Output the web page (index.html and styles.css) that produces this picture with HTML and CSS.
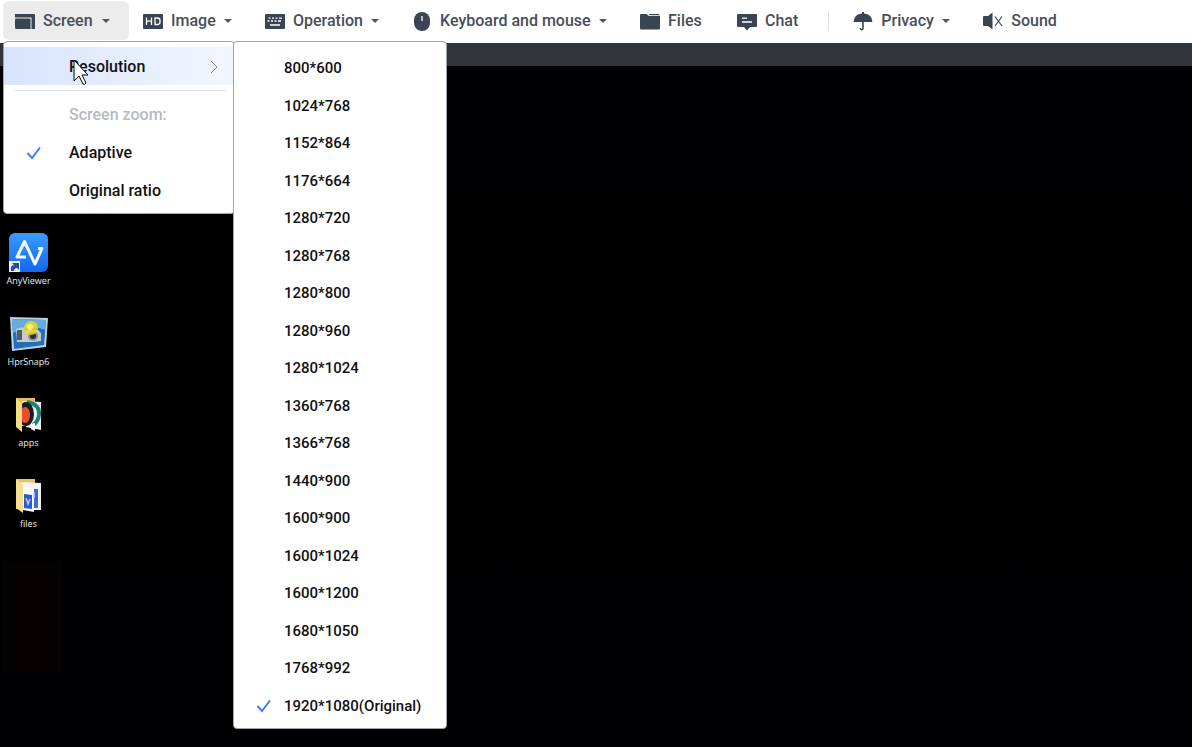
FILE: index.html
```
<!DOCTYPE html>
<html lang="en">
<head>
<meta charset="utf-8">
<meta name="viewport" content="width=device-width, initial-scale=1">
<title>Remote desktop</title>
<link rel="stylesheet" href="styles.css">
</head>
<body>
<header class="toolbar">
  <button class="tool tool-active" type="button" aria-expanded="true">
    <svg class="tool-icon" viewBox="0 0 20 20"><path d="M0 3h19q1 0 1 1v14h-3.500V6.500H0z"/><path d="M1 7.500h13.500q1 0 1 1V18H1.500Q0 18 0 16.500v-8q0-1 1-1z"/></svg>
    <span class="label label-screen">Screen</span><span class="caret"></span>
  </button>
  <button class="tool" type="button">
    <svg class="tool-icon" viewBox="0 0 20 20"><rect y="3" width="20" height="15" rx="1"/><path class="line" d="M3.500 6.500v7.500M8.500 6.500v7.500M3.500 10.200h5M12 7h2.500q2.500 0 2.500 2.500V11q0 2.500-2.500 2.500H12z"/></svg>
    <span class="label label-image">Image</span><span class="caret"></span>
  </button>
  <button class="tool" type="button">
    <svg class="tool-icon" viewBox="0 0 20 20"><rect y="3" width="20" height="15" rx="1"/><path class="line" d="M3.500 7.200h2M7 7.200h2M10.500 7.200h2M14 7.200h3M2.500 10h2M6 10h2M9.500 10h2M13 10h3M5 14h10"/></svg>
    <span class="label label-operation">Operation</span><span class="caret"></span>
  </button>
  <button class="tool" type="button">
    <svg class="tool-icon" viewBox="0 0 20 20"><rect x="2" y="1" width="16" height="19" rx="8"/><path class="line" d="M10 5v5"/></svg>
    <span class="label label-keyboard">Keyboard and mouse</span><span class="caret"></span>
  </button>
  <button class="tool" type="button">
    <svg class="tool-icon" viewBox="0 0 20 20"><path d="M1 3h5.500L9 5h11v12.500q0 1-1 1H1q-1 0-1-1V4q0-1 1-1z"/><path d="M8.500 3H19l.8 1.200H10z"/></svg>
    <span class="label label-files">Files</span>
  </button>
  <button class="tool" type="button">
    <svg class="tool-icon" viewBox="0 0 20 20"><path d="M1 3h18q1 0 1 1v11q0 1-1 1h-6l-3 3.500L7 16H1q-1 0-1-1V4q0-1 1-1z"/><path class="line" d="M5 7.200h5M5 11h10"/></svg>
    <span class="label label-chat">Chat</span>
  </button>
  <span class="divider"></span>
  <button class="tool" type="button">
    <svg class="tool-icon" viewBox="0 0 20 20"><path d="M.5 11Q1 3.300 9 2.600V1h2v1.600q8 .7 8.500 8.400z"/><path class="dark-line" d="M10 10v7q0 1.700-1.300 1.700T7.300 17"/></svg>
    <span class="label label-privacy">Privacy</span><span class="caret"></span>
  </button>
  <button class="tool" type="button">
    <svg class="tool-icon" viewBox="0 0 20 20"><path d="M1 5h4l4.500-3.500v17L5 15H1q-1 0-1-1V6q0-1 1-1z"/><path class="dark-line thin" d="M12 5.500l7 9.500M19 5.500L12 15"/></svg>
    <span class="label">Sound</span>
  </button>
</header>
<main class="remote">
  <div class="remote-bar"></div>
  <div class="desktop">
    <a class="shortcut" href="#anyviewer">
      <svg class="shortcut-icon" viewBox="0 0 40 40"><defs><linearGradient id="av" x1="0" y1="0" x2="0" y2="1"><stop stop-color="#3a9cff"/><stop offset="1" stop-color="#1467f0"/></linearGradient></defs><rect width="39" height="39" rx="6" fill="url(#av)"/><path d="M17 24H8L15.500 8.500 26 31 33 15.500H29" fill="none" stroke="#f4faff" stroke-width="3" stroke-linejoin="round"/><path d="M0 28h11v11H0z" fill="#e9eef5"/><path d="M2 38q-1-6 3-6l-2-2h7v7l-2-2q-3 0-3 3z" fill="#264f95"/></svg>
      <span>AnyViewer</span>
    </a>
    <a class="shortcut" href="#hprsnap">
      <svg class="shortcut-icon" viewBox="0 0 40 40"><path d="M1 3l38 1-2 29-34 4z" fill="#b9d2e5"/><path d="M3 5l34 1-2 25-30 4z" fill="#236fb9"/><path d="M3 5l34 1-1 10Q22 10 4 19z" fill="#66acdd"/><path d="M7 15l7-2 2 3h13l3 3v8l-7 1H8z" fill="#c9cbca"/><path d="M8 16h5v10H8z" fill="#515c6d"/><circle cx="24" cy="22" r="5" fill="#8c9299"/><circle cx="24" cy="22" r="3" fill="#252f41"/><circle cx="22" cy="14" r="7" fill="#f5da1f" opacity=".8"/><circle cx="21" cy="13" r="3" fill="#fff46a"/></svg>
      <span>HprSnap6</span>
    </a>
    <a class="shortcut" href="#apps">
      <svg class="shortcut-icon" viewBox="0 0 40 40"><path d="M7 3h19v28H7z" fill="#e6be58"/><path d="M13 6l19 1v28l-15-3z" fill="#f0f2ef"/><path d="M18 7q13 2 12 13-1 7-6 10" fill="none" stroke="#178477" stroke-width="4"/><ellipse cx="17" cy="19" rx="8" ry="12" fill="#191c20"/><ellipse cx="16" cy="20" rx="5" ry="8" fill="#e6502c"/><path d="M7 3l6 6v28l-6-5z" fill="#f5dc83"/><path d="M22 29l4-1v8l-4-2z" fill="#fff"/></svg>
      <span>apps</span>
    </a>
    <a class="shortcut" href="#files">
      <svg class="shortcut-icon" viewBox="0 0 40 40"><path d="M7 3h19v30H7z" fill="#e7c45d"/><path d="M12 6l20 1v27H17z" fill="#f2f3f5"/><path d="M23 13h6v19h-6z" fill="#4169d4"/><path d="M14 11l11 1v24l-11-2z" fill="#f9fafc"/><path d="M15 18l8 1v14l-8-1z" fill="#285ad1"/><path d="M17 22l2 6 2-5M25 16v6" fill="none" stroke="#b7cdf8" stroke-width="1.500"/><path d="M7 3l7 6v28l-7-5z" fill="#f5df8c"/></svg>
      <span>files</span>
    </a>
    <div class="shade"></div>
  </div>
</main>

<nav class="menu menu-screen" aria-label="Screen">
  <button class="item item-current" type="button">Resolution
    <svg class="chevron" viewBox="0 0 8 14"><path d="M1 1l6 6-6 6"/></svg>
  </button>
  <hr class="rule">
  <div class="item caption">Screen zoom:</div>
  <button class="item" type="button"><svg class="check" viewBox="0 0 16 14"><path d="M1.500 7l4.500 5L14 1.500"/></svg>Adaptive</button>
  <button class="item" type="button">Original ratio</button>
</nav>

<nav class="menu menu-resolution" aria-label="Resolution">
  <button class="item" type="button">800*600</button>
  <button class="item" type="button">1024*768</button>
  <button class="item" type="button">1152*864</button>
  <button class="item" type="button">1176*664</button>
  <button class="item" type="button">1280*720</button>
  <button class="item" type="button">1280*768</button>
  <button class="item" type="button">1280*800</button>
  <button class="item" type="button">1280*960</button>
  <button class="item" type="button">1280*1024</button>
  <button class="item" type="button">1360*768</button>
  <button class="item" type="button">1366*768</button>
  <button class="item" type="button">1440*900</button>
  <button class="item" type="button">1600*900</button>
  <button class="item" type="button">1600*1024</button>
  <button class="item" type="button">1600*1200</button>
  <button class="item" type="button">1680*1050</button>
  <button class="item" type="button">1768*992</button>
  <button class="item" type="button"><svg class="check" viewBox="0 0 16 14"><path d="M1.500 7l4.500 5L14 1.500"/></svg>1920*1080(Original)</button>
</nav>
<svg class="pointer" viewBox="0 0 16 27"><path d="M1 1v21l5-5 4 8q2 1 3-1l-4-8h6z"/></svg>
</body>
</html>
```
FILE: styles.css
```
* { box-sizing: border-box; }
body {
  margin: 0;
  min-height: 100vh;
  display: flex;
  flex-direction: column;
  position: relative;
  background: #000;
  color: #111;
  font: 500 16px/20px Roboto, "Liberation Sans", sans-serif;
}
button { border: 0; background: none; font: inherit; color: inherit; }
.toolbar {
  display: flex;
  align-items: flex-start;
  gap: 2px;
  min-height: 43px;
  padding: 1px 3px 2px;
  background: #fff;
  color: #484e58;
}
.tool {
  display: flex;
  align-items: center;
  gap: 8px;
  height: 39px;
  padding: 1px 19px 0 12px;
  border-radius: 6px;
  white-space: nowrap;
}
.tool-active { background: #ebebeb; }
.tool-icon { width: 20px; height: 20px; flex: none; fill: #3b4453; }
.line { fill: none; stroke: #fff; stroke-width: 1.3; }
.dark-line { fill: none; stroke: #3b4453; stroke-width: 1.6; }
.thin { stroke-width: 1.2; }
.label { text-align: left; }
.label-screen { min-width: 51px; }
.label-image { min-width: 45px; }
.label-operation { min-width: 70px; }
.label-keyboard { min-width: 151px; }
.label-files { min-width: 36px; }
.label-chat { min-width: 33px; }
.label-privacy { min-width: 53px; }
.caret { border: 4px solid transparent; border-top-color: #505762; border-bottom: 0; }
.divider { width: 1px; height: 20px; margin: 10px 10px 0 9px; background: #dcdfe4; }
.remote { flex: 1; display: flex; flex-direction: column; }
.remote-bar { height: 23px; background: #30343b; }
.desktop {
  flex: 1;
  display: flex;
  flex-direction: column;
  align-items: flex-start;
  padding-top: 167px;
  background: linear-gradient(#000003, #000 50%, #000004);
}
.shortcut {
  display: flex;
  flex-direction: column;
  align-items: center;
  width: 57px;
  height: 81px;
  color: #eee;
  font: 400 9px/16px "Open Sans", "Noto Sans", sans-serif;
  text-decoration: none;
}
.shortcut-icon { width: 40px; height: 40px; }
.shade { width: 60px; height: 113px; margin: 4px 0 0 2px; background: #050201; }
.menu {
  position: absolute;
  background: #fff;
  border: 1px solid #9ea3b0;
  border-radius: 4px;
}
.menu-screen { left: 3px; top: 41px; width: 232px; padding: 5px 0 4px; }
.menu-resolution { left: 233px; top: 41px; width: 214px; padding: 6px 0 5px; font-size: 15px; }
.item {
  display: flex;
  align-items: center;
  position: relative;
  width: 100%;
  height: 38px;
  padding: 2px 16px 0 65px;
  text-align: left;
  white-space: nowrap;
}
.menu-resolution .item { padding-left: 50px; }
.menu-resolution .item:nth-child(even) { height: 37px; }
.item-current {
  justify-content: space-between;
  background: linear-gradient(90deg, #d8e4fd, #f2f6fe);
}
.rule { height: 1px; margin: 5px 7px 4px 10px; border: 0; background: #dde3ee; }
.caption { color: #b5bac2; }
.chevron { width: 8px; height: 14px; fill: none; stroke: #7c828c; }
.check {
  position: absolute;
  left: 22px;
  width: 16px;
  height: 14px;
  fill: none;
  stroke: #3b7cf5;
  stroke-width: 2;
}
.pointer {
  position: absolute;
  left: 73px;
  top: 59px;
  width: 16px;
  height: 27px;
  fill: #fff;
  stroke: #000;
}
```
